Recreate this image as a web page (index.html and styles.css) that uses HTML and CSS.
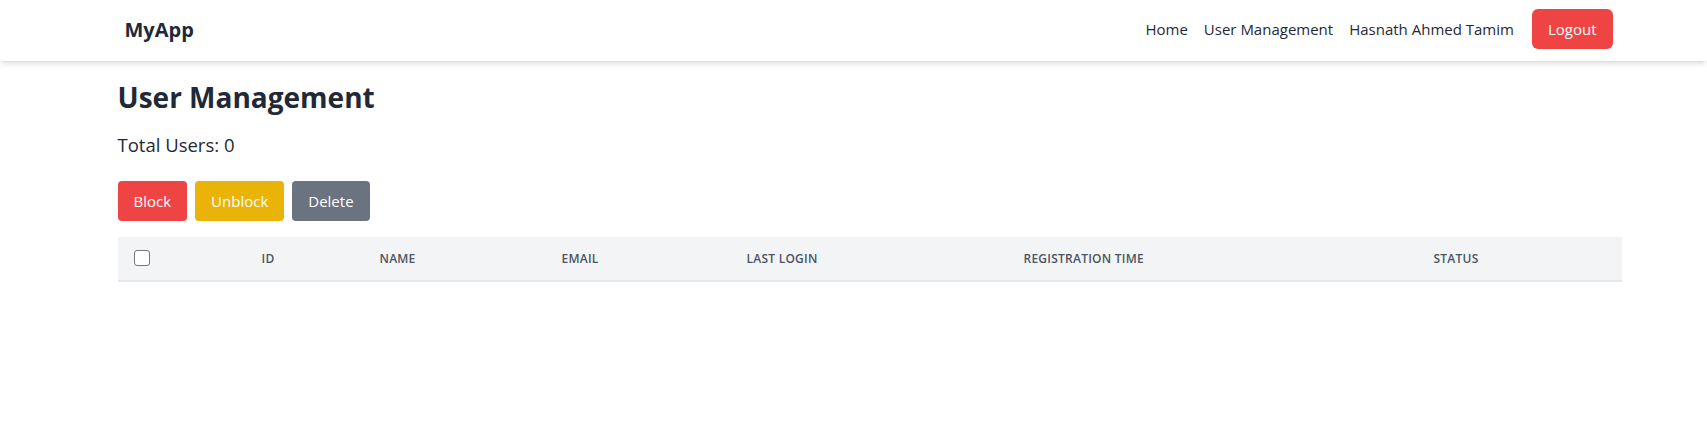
FILE: index.html
```html
<!DOCTYPE html>
<html lang="en">
<head>
<meta charset="utf-8">
<title>MyApp - User Management</title>
<link rel="stylesheet" href="styles.css">
</head>
<body>
<nav class="navbar">
  <div class="nav-inner">
    <a class="brand" href="#">MyApp</a>
    <div class="nav-links">
      <a class="nav-link" href="#">Home</a>
      <a class="nav-link" href="#">User Management</a>
      <span class="nav-user">Hasnath Ahmed Tamim</span>
      <button class="btn btn-logout">Logout</button>
    </div>
  </div>
</nav>
<main class="page">
  <h1 class="title">User Management</h1>
  <p class="total">Total Users: 0</p>
  <div class="toolbar">
    <button class="btn btn-block">Block</button>
    <button class="btn btn-unblock">Unblock</button>
    <button class="btn btn-delete">Delete</button>
  </div>
  <div class="table">
    <div class="thead">
      <div class="th th-check"><span class="checkbox"></span></div>
      <div class="th">ID</div>
      <div class="th">Name</div>
      <div class="th">Email</div>
      <div class="th">Last Login</div>
      <div class="th">Registration Time</div>
      <div class="th">Status</div>
    </div>
  </div>
</main>
</body>
</html>
```

FILE: styles.css
```css
* { box-sizing: border-box; }
html, body { margin: 0; padding: 0; background: #ffffff; }
body {
  font-family: "Open Sans", "Noto Sans", "DejaVu Sans", sans-serif;
  color: #1f2937;
}
a { text-decoration: none; color: inherit; }
button { font-family: inherit; border: 0; cursor: pointer; }

.navbar {
  background: #ffffff;
  height: 61px;
  box-shadow: 0 4px 6px -1px rgba(0,0,0,0.1), 0 2px 4px -2px rgba(0,0,0,0.1);
  position: relative;
}
.nav-inner {
  max-width: 1536px;
  margin: 0 auto;
  height: 58px;
  padding: 0 9px 0 39px;
  display: flex;
  align-items: center;
  justify-content: space-between;
}
.brand {
  font-size: 20px;
  font-weight: 700;
  color: #1f2937;
}
.nav-links {
  display: flex;
  align-items: center;
  gap: 16px;
  font-size: 15px;
  color: #1f2937;
}
.btn {
  height: 40px;
  padding: 0 16px;
  font-size: 15px;
  color: #ffffff;
  border-radius: 4px;
}
.btn-logout { background: #ef4444; border-radius: 6px; margin-left: 2px; }

.page {
  max-width: 1536px;
  margin: 0 auto;
  padding: 18px 0 0 32px;
}
.title {
  margin: 0 0 16px;
  font-size: 28px;
  line-height: 36px;
  font-weight: 700;
  color: #1f2937;
}
.total {
  margin: 0 0 22px;
  font-size: 18.5px;
  line-height: 28px;
  color: #1f2937;
}
.toolbar {
  display: flex;
  gap: 8px;
  margin-bottom: 16px;
}
.btn-block { background: #ef4444; }
.btn-unblock { background: #eab308; }
.btn-delete { background: #6b7280; }

.table { width: 100%; }
.thead {
  display: grid;
  grid-template-columns: 120px 118px 182px 185px 277px 410px 212px;
  height: 45px;
  background: #f3f4f6;
  border-bottom: 2px solid #e5e7eb;
}
.th {
  display: flex;
  align-items: center;
  padding: 0 24px;
  font-size: 12px;
  font-weight: 600;
  text-transform: uppercase;
  color: #4b5563;
  letter-spacing: 0.02em;
}
.th-check { padding: 0 16px; }
.checkbox {
  width: 16px;
  height: 16px;
  border: 1px solid #767676;
  border-radius: 3px;
  background: #ffffff;
  margin-top: -2px;
}
```
